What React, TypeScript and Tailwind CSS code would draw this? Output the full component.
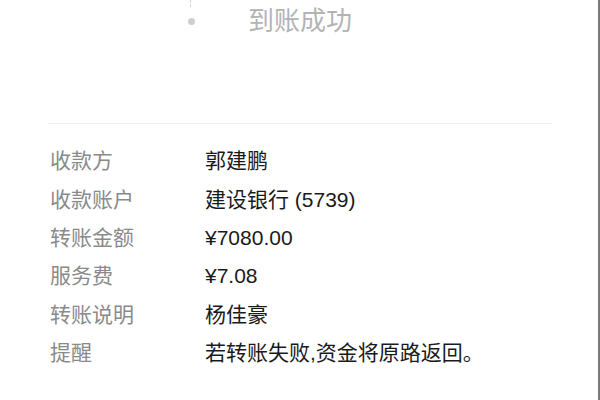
const rows = [
  { label: '收款方', value: '郭建鹏' },
  { label: '收款账户', value: '建设银行 (5739)' },
  { label: '转账金额', value: '¥7080.00' },
  { label: '服务费', value: '¥7.08' },
  { label: '转账说明', value: '杨佳豪' },
  { label: '提醒', value: '若转账失败,资金将原路返回。' },
]

export default function App() {
  return (
    <div
      className="h-[400px] w-[600px] overflow-hidden border-r-2 border-[#7a7a7a] bg-white"
      style={{ fontFamily: '"Liberation Sans", "Noto Sans CJK SC", sans-serif' }}
    >
      <div className="flex h-[42px] items-center">
        <div className="relative ml-[187px] flex h-full w-[8px] items-center justify-center">
          <div className="absolute top-0 left-[3px] h-[7px] border-l border-dashed border-[#d4d4d4]" />
          <div className="h-[7px] w-[7px] rounded-full bg-[#cfcfcf]" />
        </div>
        <div className="ml-[53px] text-[26px] leading-none text-[#b3b3b3]">到账成功</div>
      </div>
      <div className="mr-[46px] ml-[48px] mt-[81px] border-t border-[#efefef]" />
      <div className="flex flex-col pt-[18px] pl-[50px]">
        {rows.map((r) => (
          <div key={r.label} className="flex h-[38.3px] items-center text-[21px]">
            <div className="w-[155px] text-[#8a8a8a]">{r.label}</div>
            <div className="text-[#1a1a1a]">{r.value}</div>
          </div>
        ))}
      </div>
    </div>
  )
}
